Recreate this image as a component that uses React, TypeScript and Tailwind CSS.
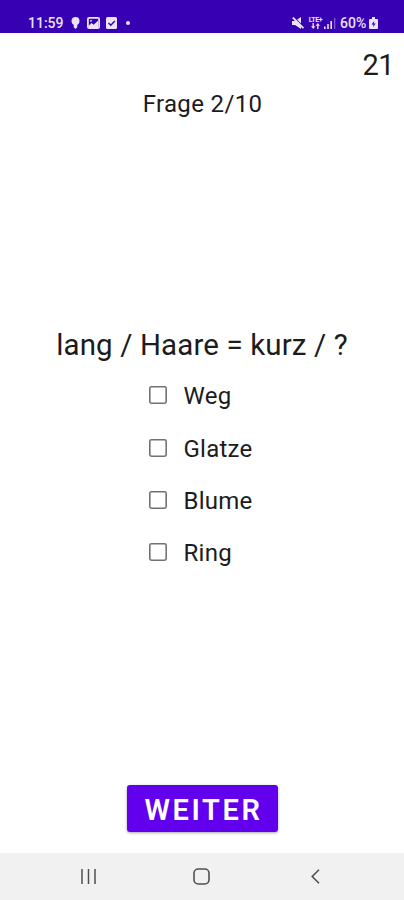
const answers = ["Weg", "Glatze", "Blume", "Ring"]

export default function App() {
    return (
        <div className="flex flex-col w-full h-[900px] bg-white text-[#1c1c1c] font-['Roboto',sans-serif]">
            <StatusBar />
            <div className="flex flex-col items-center grow">
                <div className="self-end pr-[10px] mt-[12px] text-[29px] leading-[40px] tracking-[-0.5px]">21</div>
                <div className="mt-[3px] pl-[1px] text-[24px] leading-[32px] tracking-[0.35px]">Frage 2/10</div>
                <h1 className="mt-[205px] text-[29.5px] leading-[40px] tracking-[0.12px] whitespace-nowrap">lang / Haare = kurz / ?</h1>
                <div className="flex flex-col mt-[5px]">
                    {answers.map((answer) => (
                        <Answer key={answer} label={answer} />
                    ))}
                </div>
                <button className="mt-auto mb-[21px] w-[151px] h-[47px] rounded-[3px] bg-[#6200ee] text-white text-[29px] leading-[47px] font-semibold tracking-[2.6px] pl-[3px] pt-[2px] shadow-[0_1px_3px_rgba(0,0,0,0.35)]">
                    WEITER
                </button>
            </div>
            <NavBar />
        </div>
    )
}

function Answer({ label }: { label: string }) {
    return (
        <label className="flex items-center w-[107px] h-[52.4px]">
            <svg className="-mt-[2px] shrink-0" width="18" height="18" viewBox="0 0 18 18" fill="none" stroke="#727272" strokeWidth="1.6">
                <rect x="0.8" y="0.8" width="16.4" height="16.4" rx="1.6" />
            </svg>
            <span className="ml-[17px] text-[24px] leading-[32px] tracking-[0.25px]">{label}</span>
        </label>
    )
}

function StatusBar() {
    return (
        <div className="flex items-end justify-between h-[33px] shrink-0 bg-[#3700b3] pl-[28px] pr-[25px] pb-[2px] text-[#e9e2f8]">
            <div className="flex items-center h-[16px]">
                <span className="w-[37px] text-[14px] leading-[16px] font-medium">11:59</span>
                <svg className="ml-[6px]" width="9" height="12" viewBox="0 0 9 12" fill="currentColor">
                    <circle cx="4.5" cy="4" r="4" />
                    <path d="M2.7 7h3.6v3.2L4.5 12 2.7 10.2z" />
                </svg>
                <svg className="ml-[7px]" width="13" height="12" viewBox="0 0 13 12" fill="none" stroke="currentColor" strokeWidth="1.8">
                    <rect x="0.9" y="0.9" width="11.2" height="10.2" rx="1.2" />
                    <path d="M1 9.5 4.5 6l2.2 1.8L11 3.8V11H2z" fill="currentColor" strokeWidth="0" />
                    <circle cx="4" cy="3.8" r="0.6" strokeWidth="1" />
                </svg>
                <svg className="ml-[6px]" width="11" height="12" viewBox="0 0 11 12">
                    <rect width="11" height="12" rx="1.5" fill="currentColor" />
                    <path d="m2.5 6 2.3 2.3 4-4.3" fill="none" stroke="#3700b3" strokeWidth="1.4" />
                </svg>
                <span className="ml-[9px] w-[4px] h-[4px] rounded-full bg-[#e9e2f8]"></span>
            </div>
            <div className="flex items-center h-[16px]">
                <svg width="12" height="12" viewBox="0 0 12 12" fill="currentColor">
                    <path d="M0 4h3l6-4v12L3 8H0z" />
                    <path d="M2.2 0.5 12 10.3" stroke="#3700b3" strokeWidth="1.2" />
                    <path d="M0.8 0.5 11.5 11.2" stroke="currentColor" strokeWidth="1.8" />
                </svg>
                <div className="flex flex-col items-center w-[15px] ml-[4px]">
                    <span className="text-[7px] leading-[6px] font-bold tracking-[-0.4px]">LTE+</span>
                    <svg width="9" height="6" viewBox="0 0 9 6" fill="currentColor">
                        <path d="M2.2 6 0 3.2h1.5V0h1.4v3.2h1.5zM6.8 0 4.6 2.8h1.5V6h1.4V2.8H9z" />
                    </svg>
                </div>
                <svg className="ml-[1px]" width="12" height="11" viewBox="0 0 12 11" fill="currentColor">
                    <path d="M0 8.5h1.6V11H0zM3.2 6h1.6v5H3.2zM6.4 3H8v8H6.4z" />
                    <path d="M10 0h1.3v11H10z" opacity="0.4" />
                </svg>
                <span className="ml-[4px] w-[28px] text-[14px] leading-[16px] font-medium">60%</span>
                <svg className="ml-[1px] mr-[1px]" width="9" height="12" viewBox="0 0 9 12">
                    <path d="M3 0h3v2h2a1 1 0 0 1 1 1v8a1 1 0 0 1-1 1H1a1 1 0 0 1-1-1V3a1 1 0 0 1 1-1h2z" fill="currentColor" />
                    <path d="M5.3 4 2.5 7.4h1.9L4 10l2.8-3.5H4.9z" fill="#3700b3" />
                </svg>
            </div>
        </div>
    )
}

function NavBar() {
    return (
        <div className="flex items-center justify-between h-[47px] shrink-0 bg-[#f1f1f1] pl-[81px] pr-[84px] pb-[1px] text-[#505050]">
            <svg width="15" height="15" viewBox="0 0 15 15" stroke="currentColor" strokeWidth="1.5">
                <path d="M1 0v15M7.5 0v15M14 0v15" />
            </svg>
            <svg className="-ml-[4px]" width="17" height="17" viewBox="0 0 17 17" fill="none" stroke="currentColor" strokeWidth="1.6">
                <rect x="1" y="1" width="15" height="15" rx="4.2" />
            </svg>
            <svg width="9" height="15" viewBox="0 0 9 15" fill="none" stroke="currentColor" strokeWidth="1.6">
                <path d="M8 0.8 1.2 7.5 8 14.2" />
            </svg>
        </div>
    )
}
